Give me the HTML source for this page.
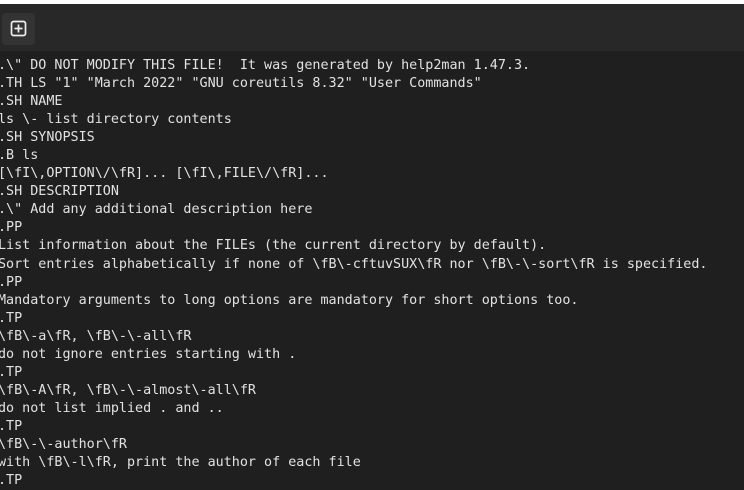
<!DOCTYPE html>
<html><head><style>
html,body{margin:0;padding:0;width:744px;height:486px;overflow:hidden;background:#1f1f1f;}
.top{position:absolute;left:0;top:0;width:744px;height:4px;background:#fff;}
.bar{position:absolute;left:0;top:4px;width:744px;height:47px;background:#282828;}
.btn{position:absolute;left:2px;top:13px;width:33px;height:32px;background:#333;border-radius:4px;}
pre{position:absolute;left:-2px;top:57px;margin:0;font-family:"DejaVu Sans Mono","Liberation Mono",monospace;font-size:13.4px;line-height:18.05px;color:#e2e2e2;}
</style></head><body>
<div class="top"></div>
<div class="bar"></div>
<div class="btn"><svg width="33" height="32" viewBox="0 0 33 32"><rect x="9.5" y="8.5" width="14" height="14" rx="2" fill="none" stroke="#eee" stroke-width="1.7"/><path d="M16.5 11.5v8M12.5 15.5h8" stroke="#eee" stroke-width="1.7"/></svg></div>
<pre>.\" DO NOT MODIFY THIS FILE!  It was generated by help2man 1.47.3.
.TH LS "1" "March 2022" "GNU coreutils 8.32" "User Commands"
.SH NAME
ls \- list directory contents
.SH SYNOPSIS
.B ls
[\fI\,OPTION\/\fR]... [\fI\,FILE\/\fR]...
.SH DESCRIPTION
.\" Add any additional description here
.PP
List information about the FILEs (the current directory by default).
Sort entries alphabetically if none of \fB\-cftuvSUX\fR nor \fB\-\-sort\fR is specified.
.PP
Mandatory arguments to long options are mandatory for short options too.
.TP
\fB\-a\fR, \fB\-\-all\fR
do not ignore entries starting with .
.TP
\fB\-A\fR, \fB\-\-almost\-all\fR
do not list implied . and ..
.TP
\fB\-\-author\fR
with \fB\-l\fR, print the author of each file
.TP</pre>
</body></html>
